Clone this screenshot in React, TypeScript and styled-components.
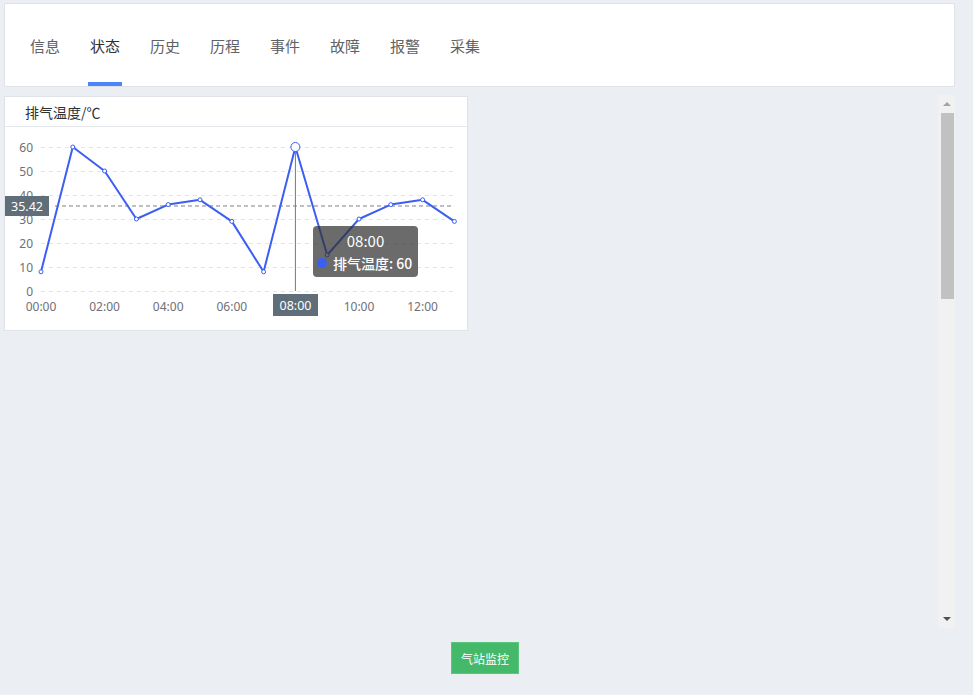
import React from "react";
import styled, { createGlobalStyle } from "styled-components";

const GlobalStyle = createGlobalStyle`
  html, body {
    margin: 0;
    padding: 0;
    background: #ebeef3;
    font-family: "Noto Sans", "Noto Sans CJK SC", sans-serif;
  }
`;

const tabs = ["信息", "状态", "历史", "历程", "事件", "故障", "报警", "采集"];
const data = [8, 60, 50, 30, 36, 38, 29, 8, 60, 15, 30, 36, 38, 29];
const active = 1;
const hover = 8;

// chart geometry (svg local px)
const x0 = 36;
const step = 31.8;
const yBase = 164;
const unit = 2.4;
const px = (i: number) => x0 + i * step;
const py = (v: number) => yBase - v * unit;
const avg = 35.42;

function Chart() {
  const path = data.map((v, i) => `${i === 0 ? "M" : "L"}${px(i)},${py(v)}`).join(" ");
  return (
    <ChartBox>
      <svg width="462" height="203" viewBox="0 0 462 203">
        {[0, 10, 20, 30, 40, 50, 60].map(v => (
          <g key={v}>
            <line x1={x0} x2={449} y1={py(v) + 0.5} y2={py(v) + 0.5} stroke="#e0e6f1" strokeDasharray="4 4" />
            <text x={28} y={py(v)} textAnchor="end" dominantBaseline="central" fontSize="12" fill="#6e7079">
              {v}
            </text>
          </g>
        ))}
        {[0, 2, 4, 6, 8, 10, 12].map(h =>
          h === hover ? null : (
            <text key={h} x={px(h)} y={179} textAnchor="middle" dominantBaseline="central" fontSize="12" fill="#6e7079">
              {`${String(h).padStart(2, "0")}:00`}
            </text>
          )
        )}
        <line x1={50} x2={449} y1={py(avg)} y2={py(avg)} stroke="#808080" strokeDasharray="4 3" />
        <line x1={px(hover)} x2={px(hover)} y1={py(60)} y2={yBase} stroke="#777" strokeWidth="1" />
        <path d={path} fill="none" stroke="#3b5ef3" strokeWidth="2" strokeLinejoin="round" />
        {data.map((v, i) =>
          i === hover ? null : (
            <circle key={i} cx={px(i)} cy={py(v)} r="2" fill="#fff" stroke="#3b5ef3" strokeWidth="1" />
          )
        )}
        <circle cx={px(hover)} cy={py(60)} r="4.5" fill="#fff" stroke="#3b5ef3" strokeWidth="1" />
        <rect x={0} y={69} width={44} height={20} fill="#5f6e78" />
        <text x={22} y={79.5} textAnchor="middle" dominantBaseline="central" fontSize="12.5" fill="#fff">
          {avg}
        </text>
        <rect x={268} y={167} width={45} height={22} fill="#5f6e78" />
        <text x={290.5} y={178.5} textAnchor="middle" dominantBaseline="central" fontSize="12.5" fill="#fff">
          08:00
        </text>
      </svg>
      <Tooltip>
        <TipTitle>08:00</TipTitle>
        <TipRow>
          <Dot />
          排气温度: 60
        </TipRow>
      </Tooltip>
    </ChartBox>
  );
}

export default function App() {
  return (
    <Page>
      <GlobalStyle />
      <TabCard>
        {tabs.map((t, i) => (
          <Tab key={t} $active={i === active}>
            {t}
          </Tab>
        ))}
      </TabCard>
      <ScrollArea>
        <Content>
          <Card>
            <CardHeader>排气温度/℃</CardHeader>
            <Chart />
          </Card>
        </Content>
        <ScrollBar>
          <Arrow $up />
          <Thumb />
          <Spacer />
          <Arrow />
        </ScrollBar>
      </ScrollArea>
      <Footer>
        <GreenButton>气站监控</GreenButton>
      </Footer>
    </Page>
  );
}

const Page = styled.div`
  width: 951px;
  padding: 3px 0 0 4px;
  display: flex;
  flex-direction: column;
`;

const TabCard = styled.div`
  height: 82px;
  background: #fff;
  border: 1px solid #dfe2e7;
  border-radius: 2px;
  display: flex;
  padding-left: 10px;
`;

const Tab = styled.div<{ $active?: boolean }>`
  position: relative;
  margin: 0 13px;
  padding: 1px 2px 0;
  display: flex;
  align-items: center;
  font-family: "Noto Sans CJK SC", sans-serif;
  font-size: 15px;
  color: ${p => (p.$active ? "#303133" : "#606266")};
  &::after {
    content: "";
    position: absolute;
    left: 0;
    right: 0;
    bottom: 0;
    height: 4px;
    background: ${p => (p.$active ? "#4d84f7" : "transparent")};
  }
`;

const ScrollArea = styled.div`
  margin-top: 8px;
  height: 533px;
  display: flex;
`;

const Content = styled.div`
  flex: 1;
  padding-top: 1px;
`;

const Card = styled.div`
  width: 462px;
  background: #fff;
  border: 1px solid #dfe2e7;
`;

const CardHeader = styled.div`
  height: 29px;
  border-bottom: 1px solid #e4e7ec;
  padding-left: 20px;
  display: flex;
  align-items: center;
  font-family: "Noto Sans CJK SC", sans-serif;
  font-size: 14px;
  color: #303133;
`;

const ChartBox = styled.div`
  position: relative;
  height: 203px;
  font-family: "Noto Sans", "Noto Sans CJK SC", sans-serif;
  svg {
    display: block;
  }
`;

const Tooltip = styled.div`
  position: absolute;
  left: 308px;
  top: 99px;
  width: 105px;
  height: 51px;
  box-sizing: border-box;
  background: rgba(50, 50, 50, 0.72);
  border-radius: 4px;
  color: #fff;
  font-family: "Noto Sans CJK SC", sans-serif;
  font-size: 14px;
  padding: 3px 0 0 4px;
`;

const TipTitle = styled.div`
  text-align: center;
  line-height: 23px;
  font-size: 15px;
  padding-right: 4px;
`;

const TipRow = styled.div`
  display: flex;
  align-items: center;
  line-height: 22px;
  font-weight: 500;
`;

const Dot = styled.span`
  width: 10px;
  height: 10px;
  border-radius: 50%;
  background: #3b5ef3;
  margin-right: 6px;
`;

const ScrollBar = styled.div`
  width: 17px;
  background: #f1f1f1;
  display: flex;
  flex-direction: column;
  align-items: center;
`;

const Arrow = styled.div<{ $up?: boolean }>`
  height: 18px;
  width: 0;
  display: flex;
  align-items: center;
  justify-content: center;
  &::before {
    content: "";
    border-left: 4px solid transparent;
    border-right: 4px solid transparent;
    ${p =>
      p.$up ? "border-bottom: 4px solid #a3a3a3;" : "border-top: 4px solid #505050;"}
  }
`;

const Thumb = styled.div`
  width: 13px;
  height: 186px;
  margin-left: 2px;
  background: #c1c1c1;
`;

const Spacer = styled.div`
  flex: 1;
`;

const Footer = styled.div`
  display: flex;
  justify-content: center;
  padding-top: 14px;
  padding-left: 11px;
`;

const GreenButton = styled.div`
  width: 68px;
  height: 32px;
  box-sizing: border-box;
  border: 1px solid #5bc47d;
  background: #45b96a;
  color: #fff;
  font-family: "Noto Sans CJK SC", sans-serif;
  font-size: 12px;
  display: flex;
  align-items: center;
  justify-content: center;
`;
